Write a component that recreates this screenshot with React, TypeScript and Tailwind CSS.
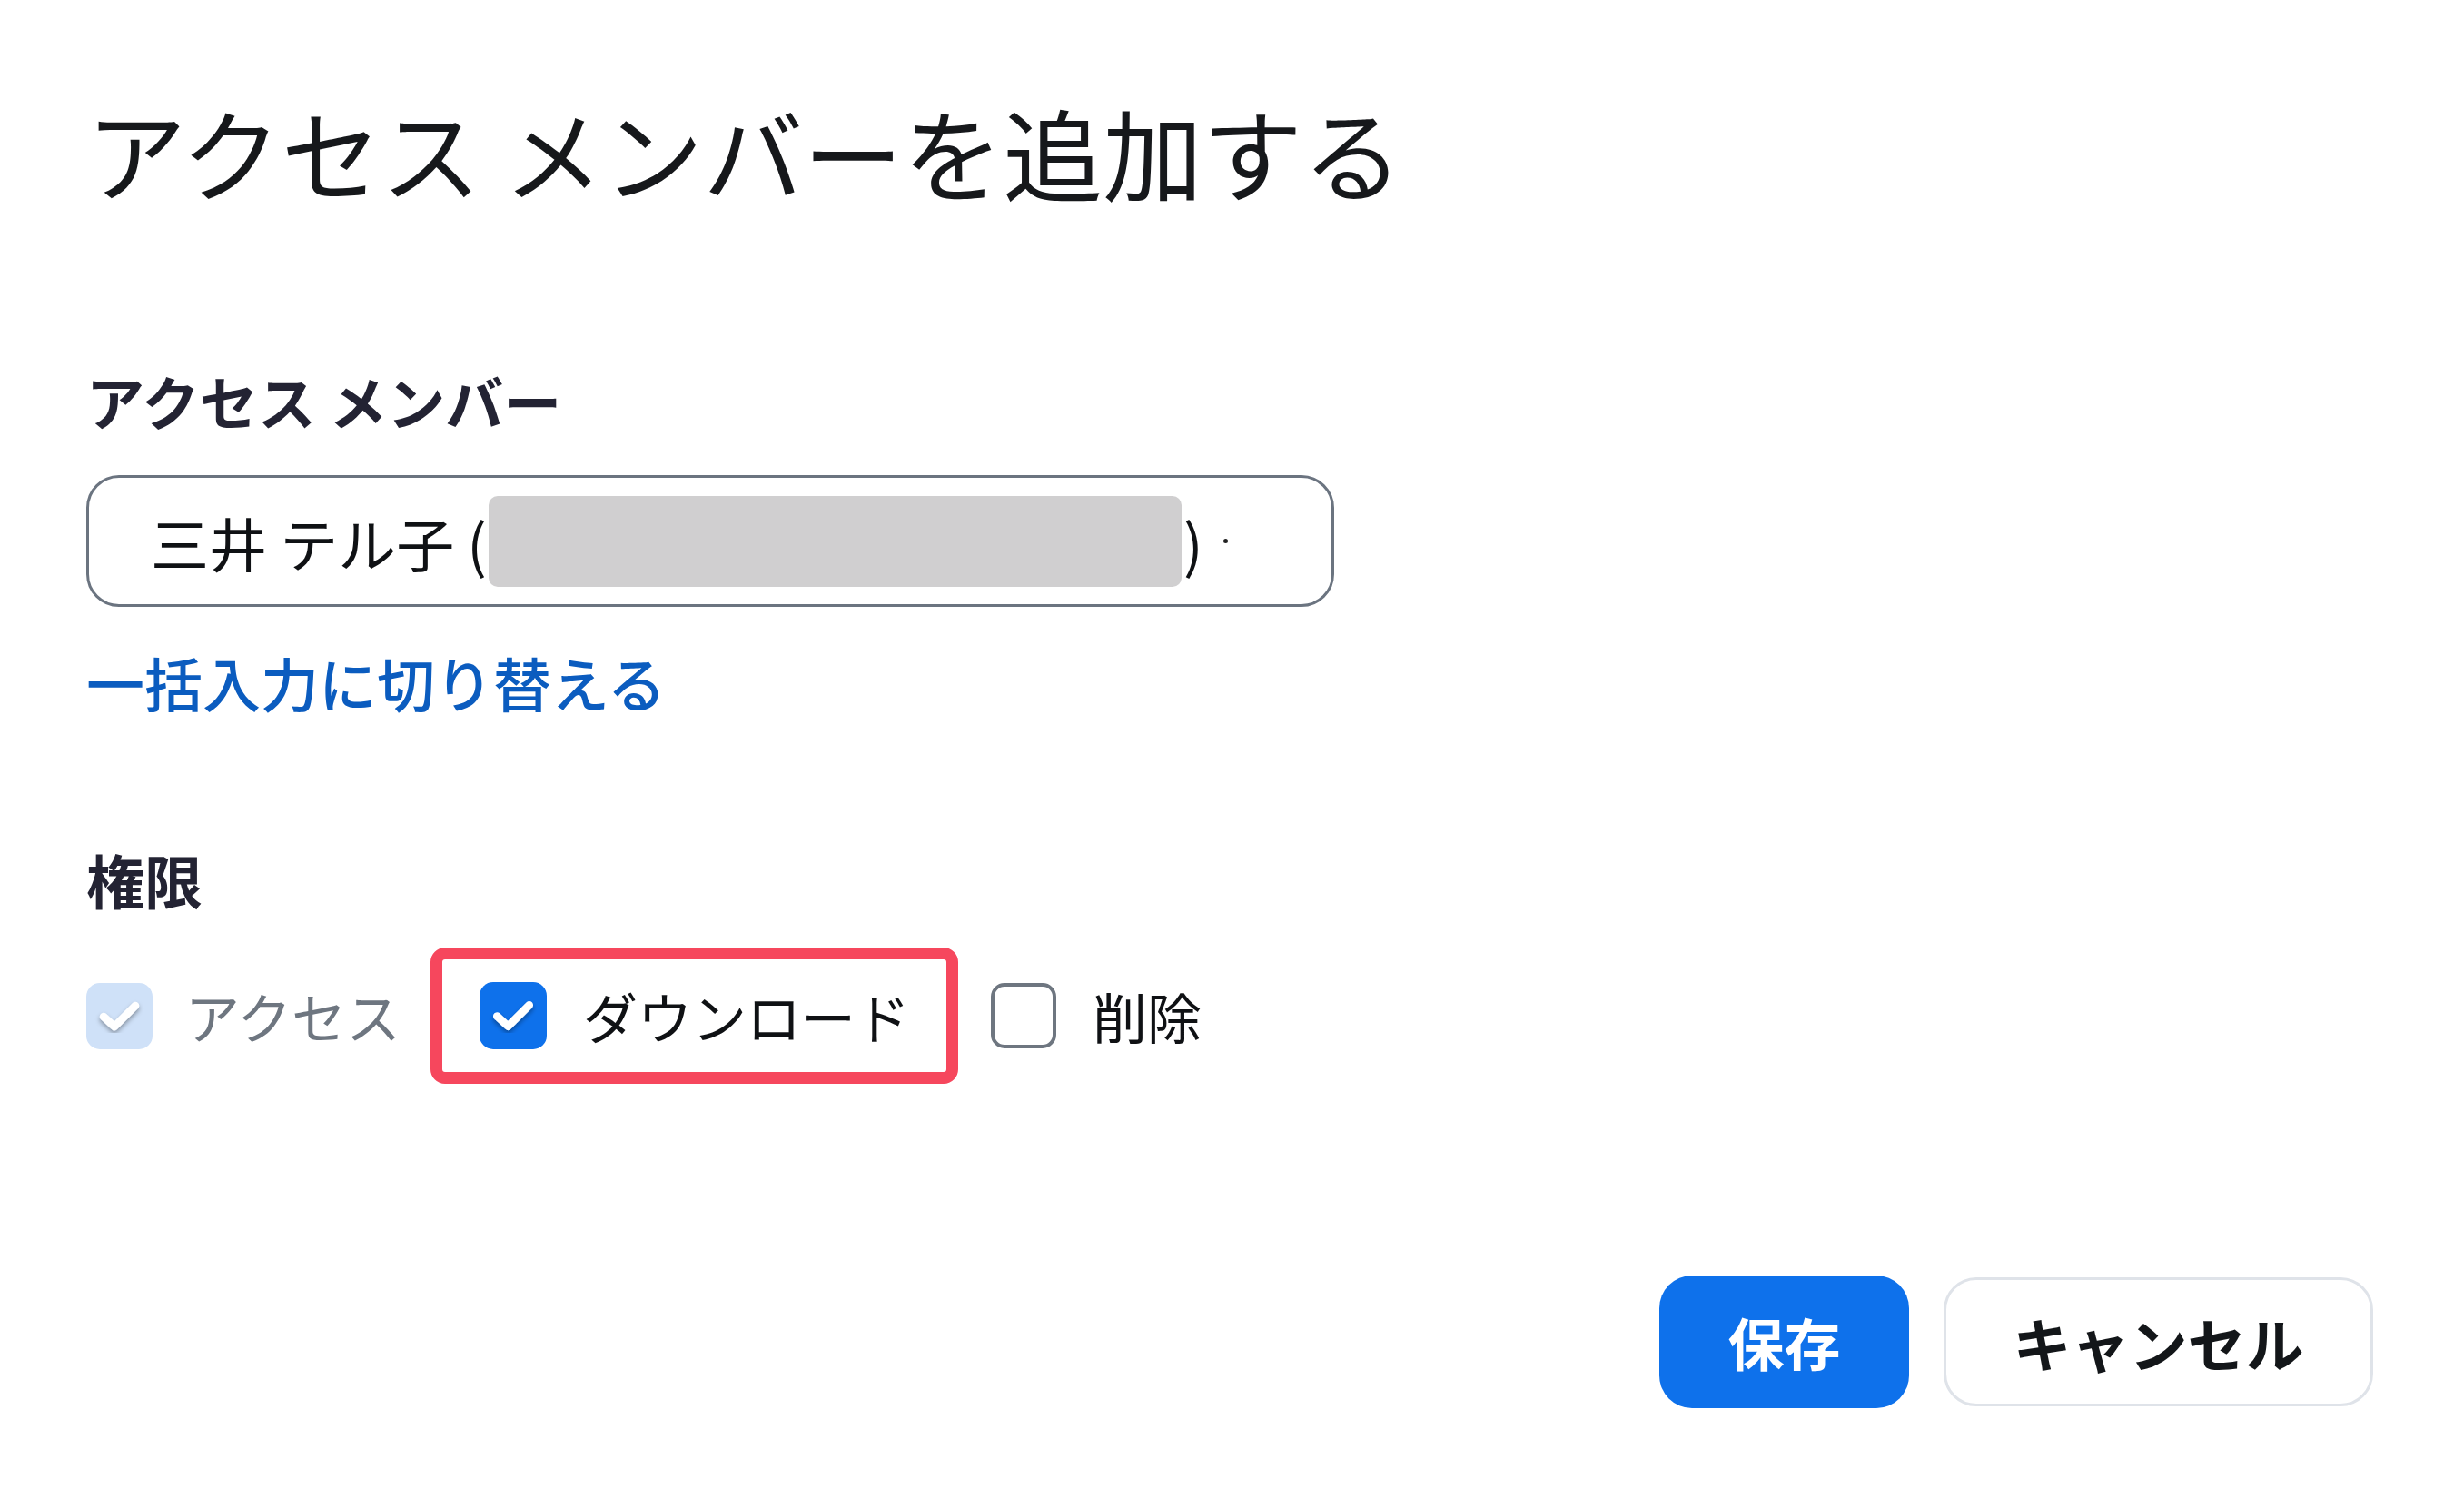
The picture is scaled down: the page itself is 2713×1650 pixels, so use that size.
import React from "react";

function Check({ color = "#ffffff" }: { color?: string }) {
  return (
    <svg viewBox="0 0 73 73" className="absolute inset-0 h-full w-full" fill="none">
      <defs>
        <filter id="cs" x="-30%" y="-30%" width="160%" height="160%">
          <feDropShadow dx="0" dy="3" stdDeviation="2.5" floodColor="#000" floodOpacity="0.35" />
        </filter>
      </defs>
      <path d="M19 37 L31 48 L54 25" stroke={color} strokeWidth="8.5" strokeLinecap="round" strokeLinejoin="round" filter="url(#cs)" />
    </svg>
  );
}

export default function App() {
  return (
    <div className="w-[2713px] h-[1650px] bg-white flex flex-col pl-[95px] pr-[100px] font-['Noto_Sans_CJK_JP',sans-serif]">
      <h1 className="mt-[111px] text-[110px] leading-none font-normal text-[#16181b] whitespace-nowrap">
        アクセス メンバーを追加する
      </h1>

      <div className="mt-[187px] text-[64px] leading-none font-bold text-[#232333] whitespace-nowrap">
        アクセス メンバー
      </div>

      <div className="mt-[51px] w-[1374px] h-[145px] rounded-[36px] border-[3px] border-[#6b7480] flex items-center pl-[68px] text-[64px] leading-none text-[#0f1114] whitespace-nowrap">
        <span>三井 テル子</span>
        <span className="ml-[14px]">(</span>
        <span className="inline-block w-[763px] h-[100px] rounded-[10px] bg-[#d0cfd0] ml-[2px]"></span>
        <span className="ml-[2px]">)</span>
        <span className="ml-[22px] w-[5px] h-[5px] rounded-full bg-[#222]"></span>
      </div>

      <div className="mt-[50px] text-[64px] leading-none font-medium text-[#0b5cbf] whitespace-nowrap">
        一括入力に切り替える
      </div>

      <div className="mt-[153px] text-[64px] leading-none font-bold text-[#232333]">権限</div>

      <div className="mt-[44px] h-[150px] flex items-center whitespace-nowrap">
        <div className="flex items-center">
          <div className="relative w-[73px] h-[73px] rounded-[15px] bg-[#cfe1f8]">
            <Check />
          </div>
          <span className="ml-[36px] text-[60px] leading-none text-[#6e7680]">アクセス</span>
        </div>
        <div className="ml-[33px] h-[150px] flex items-center border-[13px] border-[#f6475d] rounded-[16px] pl-[41px] pr-[40px]">
          <div className="relative w-[74px] h-[74px] rounded-[15px] bg-[#0e71eb]">
            <Check />
          </div>
          <span className="ml-[40px] text-[60px] leading-none text-[#0f1114]">ダウンロード</span>
        </div>
        <div className="ml-[36px] flex items-center">
          <div className="w-[72px] h-[72px] rounded-[15px] border-[4px] border-[#6e7680] bg-white"></div>
          <span className="ml-[40px] text-[60px] leading-none text-[#0f1114]">削除</span>
        </div>
      </div>

      <div className="mt-[211px] self-end flex items-center gap-[38px]">
        <button className="w-[275px] h-[146px] rounded-[36px] bg-[#0e71eb] text-white text-[62px] leading-none font-bold flex items-center justify-center">
          保存
        </button>
        <button className="w-[473px] h-[142px] rounded-[36px] border-[3px] border-[#dfe3e9] bg-white text-[#131619] text-[64px] leading-none font-bold flex items-center justify-center">
          キャンセル
        </button>
      </div>
    </div>
  );
}
